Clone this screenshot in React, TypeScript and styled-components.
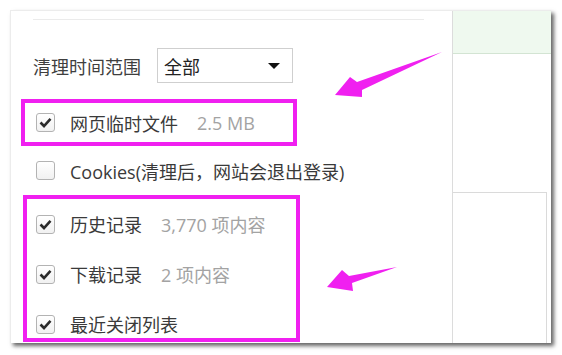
import * as React from "react";
import styled, { createGlobalStyle } from "styled-components";

const GlobalStyle = createGlobalStyle`
  html, body {
    margin: 0;
    padding: 0;
    background: #fff;
  }
  body {
    font-family: "Open Sans", "Noto Sans CJK SC", sans-serif;
    color: #3a3a3a;
  }
`;

const Page = styled.div`
  position: relative;
  width: 562px;
  height: 355px;
  overflow: hidden;
`;

const Frame = styled.div`
  box-sizing: border-box;
  margin: 10px 0 0 10px;
  width: 541px;
  height: 333px;
  display: flex;
  overflow: hidden;
  background: #fff;
  border-top: 1px solid #ececec;
  border-left: 1px solid #ececec;
  box-shadow: 3px 3px 4px rgba(0, 0, 0, 0.6);
`;

const LeftPanel = styled.div`
  width: 441px;
  flex: none;
  display: flex;
  flex-direction: column;
  border-right: 1px solid #dcdcdc;
`;

const TopRule = styled.div`
  margin: 8px 0 0 22px;
  width: 391px;
  height: 1px;
  background: #ebebeb;
`;

const RangeRow = styled.div`
  display: flex;
  align-items: center;
  height: 35px;
  margin-top: 28px;
  padding-left: 22px;
`;

const RangeLabel = styled.span`
  width: 124px;
  font-size: 18px;
  color: #3f3f3f;
  font-family: "Noto Sans CJK SC", sans-serif;
`;

const Select = styled.div`
  box-sizing: border-box;
  width: 136px;
  height: 35px;
  display: flex;
  align-items: center;
  justify-content: space-between;
  padding: 0 12px 0 6px;
  border: 1px solid #cfcfcf;
  font-size: 18px;
  font-family: "Noto Sans CJK SC", sans-serif;
  color: #222;
`;

const Caret = styled.span`
  width: 0;
  height: 0;
  border-left: 6px solid transparent;
  border-right: 6px solid transparent;
  border-top: 6px solid #111;
`;

const Highlight = styled.div<{
  $top: number;
  $left: number;
  $width: number;
  $height: number;
}>`
  box-sizing: border-box;
  margin-top: ${p => p.$top}px;
  margin-left: ${p => p.$left}px;
  width: ${p => p.$width}px;
  height: ${p => p.$height}px;
  flex: none;
  border: 4px solid #f020f0;
  overflow: hidden;
`;

const OptionRow = styled.div<{ $indent: number; $height: number }>`
  display: flex;
  align-items: center;
  height: ${p => p.$height}px;
  padding-left: ${p => p.$indent}px;
  font-size: 18px;
  white-space: nowrap;
  flex: none;
`;

const Box = styled.span`
  box-sizing: border-box;
  width: 19px;
  height: 19px;
  flex: none;
  margin-right: 15px;
  border: 1px solid #b3b3b3;
  border-radius: 3px;
  background: linear-gradient(#ffffff, #f1f1f1);
  display: flex;
  align-items: center;
  justify-content: center;
`;

const OptionText = styled.span`
  color: #3a3a3a;
`;

const Meta = styled.span`
  margin-left: 19px;
  color: #a3a3a3;
`;

const RightPanel = styled.div`
  flex: 1;
  display: flex;
  flex-direction: column;
`;

const GreenHeader = styled.div`
  height: 42px;
  flex: none;
  background: #eff9ef;
  border-bottom: 1px solid #d3e4d3;
`;

const SideBox = styled.div`
  margin-top: 138px;
  width: 93px;
  flex: 1;
  border-top: 1px solid #dadada;
  border-right: 1px solid #dadada;
`;

const Arrows = styled.svg`
  position: absolute;
  left: 0;
  top: 0;
  pointer-events: none;
`;

const Checkbox = ({ checked }: { checked: boolean }) => (
  <Box>
    {checked ? (
      <svg width="13" height="11" viewBox="0 0 13 11">
        <path
          d="M1.5 5.5 L5 9 L11.5 1.8"
          fill="none"
          stroke="#2b2b2b"
          strokeWidth="2.6"
        />
      </svg>
    ) : null}
  </Box>
);

interface Option {
  label: string;
  meta?: string;
  checked: boolean;
}

const Row = ({
  option,
  indent,
  height
}: {
  option: Option;
  indent: number;
  height: number;
}) => (
  <OptionRow $indent={indent} $height={height}>
    <Checkbox checked={option.checked} />
    <OptionText>{option.label}</OptionText>
    {option.meta ? <Meta>{option.meta}</Meta> : null}
  </OptionRow>
);

const history: Option[] = [
  { label: "历史记录", meta: "3,770 项内容", checked: true },
  { label: "下载记录", meta: "2 项内容", checked: true },
  { label: "最近关闭列表", checked: true }
];

export default function App() {
  return (
    <Page>
      <GlobalStyle />
      <Frame>
        <LeftPanel>
          <TopRule />
          <RangeRow>
            <RangeLabel>清理时间范围</RangeLabel>
            <Select>
              <span>全部</span>
              <Caret />
            </Select>
          </RangeRow>
          <Highlight $top={16} $left={10} $width={276} $height={47}>
            <Row
              option={{ label: "网页临时文件", meta: "2.5 MB", checked: true }}
              indent={11}
              height={39}
            />
          </Highlight>
          <Row
            option={{ label: "Cookies(清理后，网站会退出登录)", checked: false }}
            indent={25}
            height={49}
          />
          <Highlight $top={0} $left={12} $width={277} $height={147}>
            {history.map(o => (
              <Row key={o.label} option={o} indent={9} height={50} />
            ))}
          </Highlight>
        </LeftPanel>
        <RightPanel>
          <GreenHeader />
          <SideBox />
        </RightPanel>
      </Frame>
      <Arrows width="562" height="355" viewBox="0 0 562 355">
        <polygon
          points="335,95 350,77 357,82 442,52 362,90 362,97"
          fill="#f020f0"
        />
        <polygon
          points="327,287 342,270 349,276 397,267 352,283 353,291"
          fill="#f020f0"
        />
      </Arrows>
    </Page>
  );
}
